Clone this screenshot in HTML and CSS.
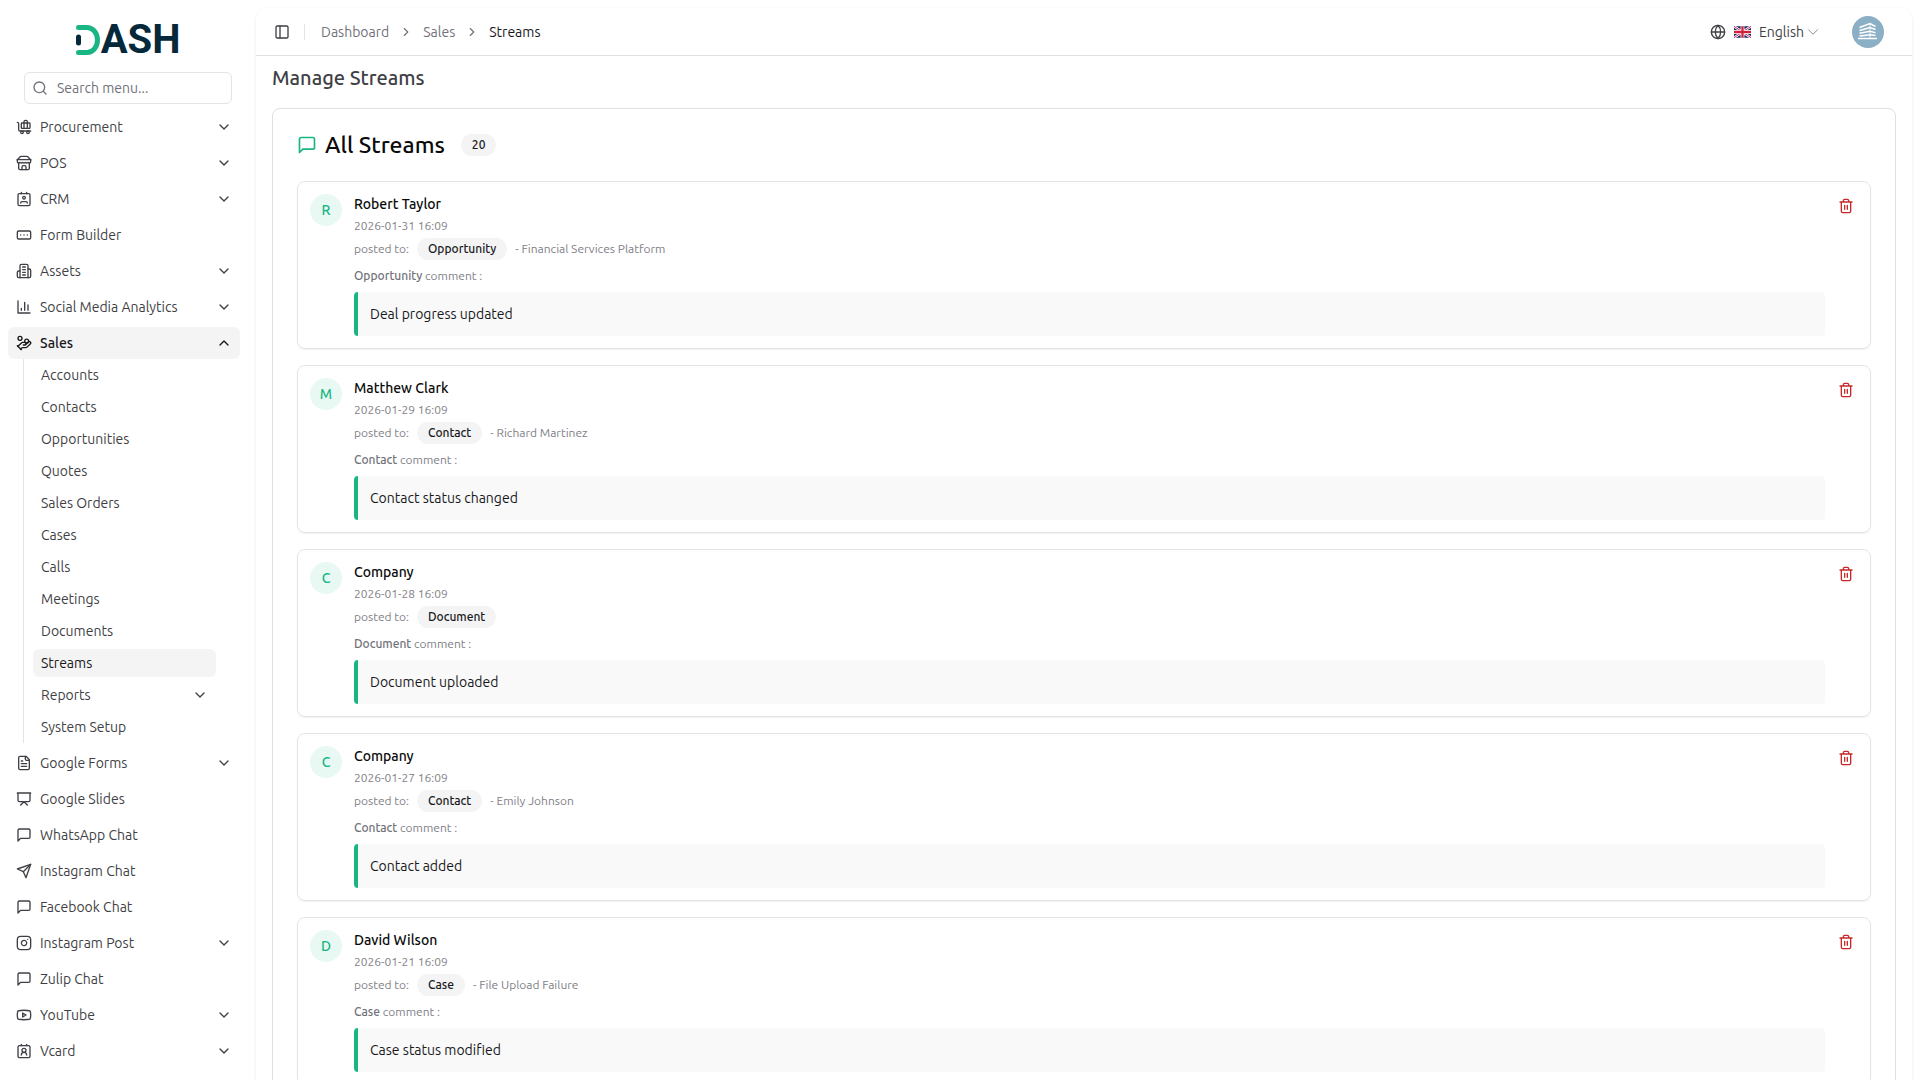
FILE: index.html
```html
<!DOCTYPE html>
<html lang="en">
<head>
<meta charset="utf-8">
<meta name="viewport" content="width=device-width, initial-scale=1">
<title>Manage Streams</title>
<link rel="stylesheet" href="styles.css">
</head>
<body>
<svg class="sprite" aria-hidden="true">
  <symbol id="chevron-down" viewBox="0 0 24 24"><path d="m6 9 6 6 6-6"/></symbol>
  <symbol id="chevron-wide" viewBox="0 0 24 24"><path d="m3 7.500 9 9 9-9"/></symbol>
  <symbol id="chevron-up" viewBox="0 0 24 24"><path d="m18 15-6-6-6 6"/></symbol>
  <symbol id="chevron-right" viewBox="0 0 24 24"><path d="m9 18 6-6-6-6"/></symbol>
  <symbol id="search" viewBox="0 0 24 24"><circle cx="11" cy="11" r="8"/><path d="m21 21-4.3-4.3"/></symbol>
  <symbol id="baggage" viewBox="0 0 24 24"><path d="M22 18H6a2 2 0 0 1-2-2V7a2 2 0 0 0-2-2"/><path d="M17 14V4a2 2 0 0 0-2-2h-1a2 2 0 0 0-2 2v10"/><rect width="13" height="8" x="8" y="6" rx="1"/><circle cx="18" cy="20" r="2"/><circle cx="9" cy="20" r="2"/></symbol>
  <symbol id="store" viewBox="0 0 24 24"><path d="m2 7 4.41-4.41A2 2 0 0 1 7.83 2h8.34a2 2 0 0 1 1.42.59L22 7"/><path d="M4 12v8a2 2 0 0 0 2 2h12a2 2 0 0 0 2-2v-8"/><path d="M15 22v-4a2 2 0 0 0-2-2h-2a2 2 0 0 0-2 2v4"/><path d="M2 7h20"/><path d="M22 7v3a2 2 0 0 1-2 2a2.7 2.7 0 0 1-1.59-.63.7.7 0 0 0-.82 0A2.7 2.7 0 0 1 16 12a2.7 2.7 0 0 1-1.59-.63.7.7 0 0 0-.82 0A2.7 2.7 0 0 1 12 12a2.7 2.7 0 0 1-1.59-.63.7.7 0 0 0-.82 0A2.7 2.7 0 0 1 8 12a2.7 2.7 0 0 1-1.59-.63.7.7 0 0 0-.82 0A2.7 2.7 0 0 1 4 12a2 2 0 0 1-2-2V7"/></symbol>
  <symbol id="contact" viewBox="0 0 24 24"><path d="M17 18a2 2 0 0 0-2-2H9a2 2 0 0 0-2 2"/><rect width="18" height="18" x="3" y="4" rx="2"/><circle cx="12" cy="10" r="2"/><path d="M8 2v2M16 2v2"/></symbol>
  <symbol id="vcard" viewBox="0 0 24 24"><path d="M16 18a4 4 0 0 0-8 0"/><circle cx="12" cy="11" r="3"/><rect width="18" height="18" x="3" y="4" rx="2"/><path d="M8 2v2M16 2v2"/></symbol>
  <symbol id="form" viewBox="0 0 24 24"><rect width="20" height="12" x="2" y="6" rx="2"/><path d="M12 12h.01M17 12h.01M7 12h.01"/></symbol>
  <symbol id="building" viewBox="0 0 24 24"><path d="M6 22V4a2 2 0 0 1 2-2h8a2 2 0 0 1 2 2v18Z"/><path d="M6 12H4a2 2 0 0 0-2 2v6a2 2 0 0 0 2 2h2"/><path d="M18 9h2a2 2 0 0 1 2 2v9a2 2 0 0 1-2 2h-2"/><path d="M10 6h4M10 10h4M10 14h4M10 18h4"/></symbol>
  <symbol id="chart" viewBox="0 0 24 24"><path d="M3 3v18h18M18 17V9M13 17V5M8 17v-3"/></symbol>
  <symbol id="coins" viewBox="0 0 24 24"><path d="M11 15h2a2 2 0 1 0 0-4h-3c-.6 0-1.1.2-1.4.6L3 17"/><path d="m7 21 1.6-1.4c.3-.4.8-.6 1.4-.6h4c1.1 0 2.1-.4 2.8-1.2l4.6-4.4a2 2 0 0 0-2.75-2.91l-4.2 3.9"/><path d="m2 16 6 6"/><circle cx="16" cy="9" r="2.9"/><circle cx="6" cy="5" r="3"/></symbol>
  <symbol id="file" viewBox="0 0 24 24"><path d="M15 2H6a2 2 0 0 0-2 2v16a2 2 0 0 0 2 2h12a2 2 0 0 0 2-2V7Z"/><path d="M14 2v4a2 2 0 0 0 2 2h4M10 9H8M16 13H8M16 17H8"/></symbol>
  <symbol id="slides" viewBox="0 0 24 24"><path d="M2 3h20M21 3v11a2 2 0 0 1-2 2H5a2 2 0 0 1-2-2V3M7 21l5-5 5 5"/></symbol>
  <symbol id="message" viewBox="0 0 24 24"><path d="M21 15a2 2 0 0 1-2 2H7l-4 4V5a2 2 0 0 1 2-2h14a2 2 0 0 1 2 2z"/></symbol>
  <symbol id="send" viewBox="0 0 24 24"><path d="m22 2-7 20-4-9-9-4Z"/><path d="M22 2 11 13"/></symbol>
  <symbol id="instagram" viewBox="0 0 24 24"><rect width="20" height="20" x="2" y="2" rx="5"/><path d="M16 11.37A4 4 0 1 1 12.63 8 4 4 0 0 1 16 11.37z"/><path d="M17.5 6.5h.01"/></symbol>
  <symbol id="youtube" viewBox="0 0 24 24"><path d="M2.5 17a24.12 24.12 0 0 1 0-10 2 2 0 0 1 1.4-1.4 49.56 49.56 0 0 1 16.2 0A2 2 0 0 1 21.5 7a24.12 24.12 0 0 1 0 10 2 2 0 0 1-1.4 1.4 49.55 49.55 0 0 1-16.2 0A2 2 0 0 1 2.5 17"/><path d="m10 15 5-3-5-3z"/></symbol>
  <symbol id="panel" viewBox="0 0 24 24"><rect width="18" height="18" x="3" y="3" rx="2"/><path d="M9 3v18"/></symbol>
  <symbol id="globe" viewBox="0 0 24 24"><circle cx="12" cy="12" r="10"/><path d="M12 2a14.5 14.5 0 0 0 0 20 14.5 14.5 0 0 0 0-20M2 12h20"/></symbol>
  <symbol id="trash" viewBox="0 0 24 24"><path d="M3 6h18M19 6v14c0 1-1 2-2 2H7c-1 0-2-1-2-2V6M8 6V4c0-1 1-2 2-2h4c1 0 2 1 2 2v2M10 11v6M14 11v6"/></symbol>
</svg>

<div class="shell">
  <aside class="sidebar">
    <a class="logo" href="#" aria-label="Dash">
      <svg class="logo-mark" viewBox="0 0 24 30" aria-hidden="true">
        <path d="M2.500 2.500H11a10.500 12.500 0 0 1 0 25H2.500" fill="none" stroke="#19b683" stroke-width="5" stroke-linecap="round"/>
        <path d="M2.500 12v6" stroke="#05283a" stroke-width="5" stroke-linecap="round"/>
      </svg>
      <span class="logo-text">ASH</span>
    </a>
    <div class="search">
      <svg class="icon"><use href="#search"/></svg>
      <input type="text" placeholder="Search menu..." aria-label="Search menu">
    </div>
    <nav class="menu">
      <a class="item" href="#"><svg class="icon"><use href="#baggage"/></svg><span>Procurement</span><svg class="icon"><use href="#chevron-down"/></svg></a>
      <a class="item" href="#"><svg class="icon"><use href="#store"/></svg><span>POS</span><svg class="icon"><use href="#chevron-down"/></svg></a>
      <a class="item" href="#"><svg class="icon"><use href="#contact"/></svg><span>CRM</span><svg class="icon"><use href="#chevron-down"/></svg></a>
      <a class="item" href="#"><svg class="icon"><use href="#form"/></svg><span>Form Builder</span></a>
      <a class="item" href="#"><svg class="icon"><use href="#building"/></svg><span>Assets</span><svg class="icon"><use href="#chevron-down"/></svg></a>
      <a class="item" href="#"><svg class="icon"><use href="#chart"/></svg><span>Social Media Analytics</span><svg class="icon"><use href="#chevron-down"/></svg></a>
      <div class="group">
        <a class="item active" href="#"><svg class="icon"><use href="#coins"/></svg><span>Sales</span><svg class="icon"><use href="#chevron-up"/></svg></a>
        <div class="submenu">
          <a class="subitem" href="#"><span>Accounts</span></a>
          <a class="subitem" href="#"><span>Contacts</span></a>
          <a class="subitem" href="#"><span>Opportunities</span></a>
          <a class="subitem" href="#"><span>Quotes</span></a>
          <a class="subitem" href="#"><span>Sales Orders</span></a>
          <a class="subitem" href="#"><span>Cases</span></a>
          <a class="subitem" href="#"><span>Calls</span></a>
          <a class="subitem" href="#"><span>Meetings</span></a>
          <a class="subitem" href="#"><span>Documents</span></a>
          <a class="subitem current" href="#"><span>Streams</span></a>
          <a class="subitem" href="#"><span>Reports</span><svg class="icon"><use href="#chevron-down"/></svg></a>
          <a class="subitem" href="#"><span>System Setup</span></a>
        </div>
      </div>
      <a class="item" href="#"><svg class="icon"><use href="#file"/></svg><span>Google Forms</span><svg class="icon"><use href="#chevron-down"/></svg></a>
      <a class="item" href="#"><svg class="icon"><use href="#slides"/></svg><span>Google Slides</span></a>
      <a class="item" href="#"><svg class="icon"><use href="#message"/></svg><span>WhatsApp Chat</span></a>
      <a class="item" href="#"><svg class="icon"><use href="#send"/></svg><span>Instagram Chat</span></a>
      <a class="item" href="#"><svg class="icon"><use href="#message"/></svg><span>Facebook Chat</span></a>
      <a class="item" href="#"><svg class="icon"><use href="#instagram"/></svg><span>Instagram Post</span><svg class="icon"><use href="#chevron-down"/></svg></a>
      <a class="item" href="#"><svg class="icon"><use href="#message"/></svg><span>Zulip Chat</span></a>
      <a class="item" href="#"><svg class="icon"><use href="#youtube"/></svg><span>YouTube</span><svg class="icon"><use href="#chevron-down"/></svg></a>
      <a class="item" href="#"><svg class="icon"><use href="#vcard"/></svg><span>Vcard</span><svg class="icon"><use href="#chevron-down"/></svg></a>
    </nav>
  </aside>

  <main class="panel">
    <header class="topbar">
      <button class="plain" type="button" aria-label="Toggle sidebar"><svg class="icon"><use href="#panel"/></svg></button>
      <span class="divider"></span>
      <nav class="crumbs" aria-label="Breadcrumb">
        <a href="#">Dashboard</a>
        <svg class="icon small"><use href="#chevron-right"/></svg>
        <a href="#">Sales</a>
        <svg class="icon small"><use href="#chevron-right"/></svg>
        <span class="here">Streams</span>
      </nav>
      <button class="plain language" type="button">
        <svg class="icon"><use href="#globe"/></svg>
        <svg class="flag" viewBox="0 0 18 12" aria-hidden="true">
          <rect width="18" height="12" rx="1" fill="#1b2a72"/>
          <path d="M0 0l18 12M18 0L0 12" stroke="#fff" stroke-width="2.6"/>
          <path d="M0 0l18 12M18 0L0 12" stroke="#d0213c" stroke-width="1"/>
          <path d="M9 0v12M0 6h18" stroke="#fff" stroke-width="4"/>
          <path d="M9 0v12M0 6h18" stroke="#d0213c" stroke-width="2.4"/>
        </svg>
        <span class="language-name">English<svg class="icon faint"><use href="#chevron-wide"/></svg></span>
      </button>
      <button class="plain account" type="button" aria-label="Account">
        <svg viewBox="0 0 32 32" aria-hidden="true">
          <circle cx="16" cy="16" r="16" fill="#8bafc4"/>
          <g fill="none" stroke="#fff" stroke-width="1.5">
            <path d="M7.500 11.500 18 7.500l5.500 3M7.500 14.500 18 11.500l5.500 2M7.500 17.300 18 15.300l5.500 1.400M7.500 20 18 18.800l5.500.8M6 22.600h19"/>
            <path d="M18 7.500v15" stroke-width=".8"/>
          </g>
        </svg>
      </button>
    </header>
    <div class="content">
      <h1>Manage Streams</h1>
      <section class="card">
        <div class="card-title">
          <svg class="icon"><use href="#message"/></svg>
          <h2>All Streams</h2>
          <span class="badge">20</span>
        </div>
        <div class="streams">
          <article class="stream">
            <span class="avatar">R</span>
            <div class="body">
              <h3>Robert Taylor</h3>
              <time>2026-01-31 16:09</time>
              <p class="posted">posted to: <span class="badge">Opportunity</span> <span>- Financial Services Platform</span></p>
              <p class="kind"><b>Opportunity</b> comment :</p>
              <blockquote>Deal progress updated</blockquote>
            </div>
            <button class="plain delete" type="button" aria-label="Delete"><svg class="icon"><use href="#trash"/></svg></button>
          </article>
          <article class="stream">
            <span class="avatar">M</span>
            <div class="body">
              <h3>Matthew Clark</h3>
              <time>2026-01-29 16:09</time>
              <p class="posted">posted to: <span class="badge">Contact</span> <span>- Richard Martinez</span></p>
              <p class="kind"><b>Contact</b> comment :</p>
              <blockquote>Contact status changed</blockquote>
            </div>
            <button class="plain delete" type="button" aria-label="Delete"><svg class="icon"><use href="#trash"/></svg></button>
          </article>
          <article class="stream">
            <span class="avatar">C</span>
            <div class="body">
              <h3>Company</h3>
              <time>2026-01-28 16:09</time>
              <p class="posted">posted to: <span class="badge">Document</span></p>
              <p class="kind"><b>Document</b> comment :</p>
              <blockquote>Document uploaded</blockquote>
            </div>
            <button class="plain delete" type="button" aria-label="Delete"><svg class="icon"><use href="#trash"/></svg></button>
          </article>
          <article class="stream">
            <span class="avatar">C</span>
            <div class="body">
              <h3>Company</h3>
              <time>2026-01-27 16:09</time>
              <p class="posted">posted to: <span class="badge">Contact</span> <span>- Emily Johnson</span></p>
              <p class="kind"><b>Contact</b> comment :</p>
              <blockquote>Contact added</blockquote>
            </div>
            <button class="plain delete" type="button" aria-label="Delete"><svg class="icon"><use href="#trash"/></svg></button>
          </article>
          <article class="stream">
            <span class="avatar">D</span>
            <div class="body">
              <h3>David Wilson</h3>
              <time>2026-01-21 16:09</time>
              <p class="posted">posted to: <span class="badge">Case</span> <span>- File Upload Failure</span></p>
              <p class="kind"><b>Case</b> comment :</p>
              <blockquote>Case status modified</blockquote>
            </div>
            <button class="plain delete" type="button" aria-label="Delete"><svg class="icon"><use href="#trash"/></svg></button>
          </article>
        </div>
      </section>
    </div>
  </main>
</div>
</body>
</html>
```
FILE: styles.css
```css
* { box-sizing: border-box; }

body {
  margin: 0;
  height: 100vh;
  overflow: hidden;
  background: #fff;
  color: #0a0a0a;
  font: 14px/20px Ubuntu, "Noto Sans", "Open Sans", sans-serif;
}

h1, h2, h3, p, blockquote { margin: 0; }
h1, h2, h3, .badge, .avatar { font-weight: 550; }
a { color: inherit; text-decoration: none; }
.sprite { display: none; }

.icon {
  width: 16px;
  height: 16px;
  flex: none;
  fill: none;
  stroke: currentColor;
  stroke-width: 2;
  stroke-linecap: round;
  stroke-linejoin: round;
}

.plain {
  display: flex;
  align-items: center;
  padding: 0;
  border: 0;
  background: none;
  color: #3f3f46;
  font: inherit;
}

.shell { display: flex; height: 100%; }

/* Sidebar */
.sidebar {
  width: 256px;
  flex: none;
  padding: 16px 16px 0 8px;
  color: #3f3f46;
}

.logo {
  display: flex;
  justify-content: center;
  align-items: center;
  gap: 1px;
  height: 48px;
  padding-left: 8px;
}
.logo-mark { width: 24px; height: 30px; }
.logo-text {
  color: #05283a;
  font: 700 40px/48px Roboto, sans-serif;
}

.search {
  display: flex;
  align-items: center;
  gap: 9px;
  height: 32px;
  margin: 8px 8px 7px 16px;
  padding: 0 7px;
  border: 1px solid #e4e4e7;
  border-radius: 6px;
  color: #71717a;
}
.search input {
  flex: 1;
  min-width: 0;
  padding: 0;
  border: 0;
  outline: 0;
  background: none;
  font: inherit;
}
.search input::placeholder { color: #71717a; opacity: 1; }

.menu { display: flex; flex-direction: column; gap: 4px; }
.item, .subitem {
  display: flex;
  align-items: center;
  gap: 8px;
  padding: 0 8px;
  border-radius: 6px;
}
.item { height: 32px; }
.item span, .subitem span { flex: 1; }
.item.active { background: #f4f4f5; color: #18181b; font-weight: 500; }

.submenu {
  display: flex;
  flex-direction: column;
  gap: 4px;
  margin: 0 24px 0 15px;
  padding: 2px 0 2px 9px;
  border-left: 1px solid #e4e4e7;
}
.subitem { height: 28px; }
.subitem.current { background: #f4f4f5; color: #18181b; }

/* Main panel */
.panel {
  flex: 1;
  min-width: 0;
  height: max-content;
  margin: 8px 8px 0 0;
  border-radius: 12px;
  box-shadow: 0 1px 3px rgba(0, 0, 0, 0.1);
}

.topbar {
  display: flex;
  align-items: center;
  height: 48px;
  padding: 0 28px 0 18px;
  border-bottom: 1px solid #e0e0e3;
}
.divider {
  width: 1px;
  height: 16px;
  margin: 0 16px 0 14px;
  background: #e4e4e7;
}
.crumbs {
  display: flex;
  align-items: center;
  gap: 10px;
  flex: 1;
  color: #71717a;
}
.crumbs .here { color: #18181b; }
.icon.small { width: 14px; height: 14px; }
.language { gap: 8px; }
.flag { width: 17px; height: 12px; }
.language-name { display: flex; align-items: center; gap: 3px; }
.icon.faint { width: 12px; height: 12px; color: #8a8a90; }
.account { margin-left: 33px; }
.account svg { width: 32px; height: 32px; }

.content { padding: 8px 16px; }
h1 {
  color: #3f3f46;
  font-size: 20px;
  line-height: 28px;
}

.card {
  margin-top: 16px;
  padding: 24px;
  border: 1px solid #e0e0e3;
  border-radius: 8px;
}
.card-title {
  display: flex;
  align-items: center;
  gap: 8px;
  height: 24px;
  margin-bottom: 24px;
}
.card-title .icon { width: 20px; height: 20px; color: #19b683; }
h2 { font-size: 23px; line-height: 24px; }
.card-title .badge { margin-left: 8px; }

.badge {
  height: 22px;
  padding: 0 11px;
  border-radius: 11px;
  background: #f4f4f5;
  color: #18181b;
  font-size: 12px;
  line-height: 22px;
}

.streams { display: flex; flex-direction: column; gap: 16px; }
.stream {
  display: flex;
  align-items: flex-start;
  padding: 12px;
  border: 1px solid #e4e4e7;
  border-radius: 8px;
  box-shadow: 0 1px 2px rgba(0, 0, 0, 0.06);
}
.avatar {
  width: 32px;
  height: 32px;
  flex: none;
  margin-right: 12px;
  border-radius: 50%;
  background: #e8f8f3;
  color: #19b683;
  line-height: 32px;
  text-align: center;
}
.body {
  display: flex;
  flex-direction: column;
  flex: 1;
  color: #808087;
  font-size: 12px;
  line-height: 16px;
}
h3 {
  margin-bottom: 4px;
  color: #0a0a0a;
  font-size: 14px;
  line-height: 20px;
}
.posted {
  display: flex;
  align-items: center;
  gap: 8px;
  margin: 4px 0 8px;
}
.kind b { font-weight: 500; color: #71717a; }
blockquote {
  margin-top: 8px;
  padding: 12px;
  border-left: 4px solid #19b683;
  border-radius: 4px;
  background: #f9f9f9;
  color: #18181b;
  font-size: 14px;
  line-height: 20px;
}
.delete {
  width: 33px;
  height: 24px;
  justify-content: flex-end;
  padding-right: 4px;
  color: #c62828;
}
```
